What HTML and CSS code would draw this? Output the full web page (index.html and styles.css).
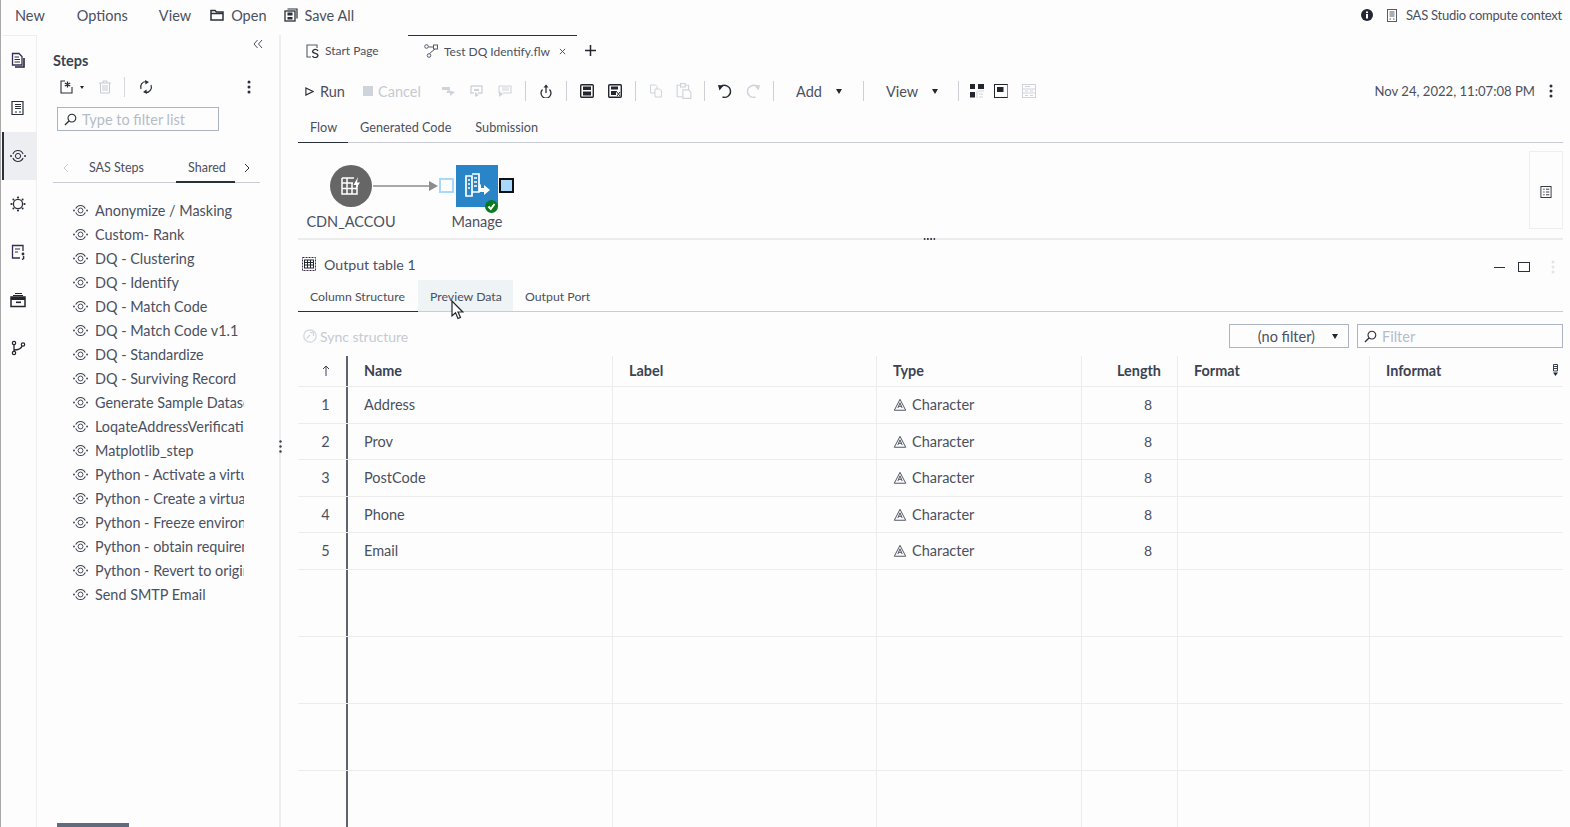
FILE: index.html
```html
<!DOCTYPE html>
<html lang="en">
<head>
    <meta charset="UTF-8">
    <title>SAS Studio - Test DQ Identify.flw</title>
    <link rel="stylesheet" href="styles.css">
</head>
<body>
    <!-- Shared icons -->
    <svg class="sprite" xmlns="http://www.w3.org/2000/svg">
        <symbol id="i-step" viewBox="0 0 16 16">
            <circle cx="8" cy="8" r="2.6" fill="none" stroke="currentColor"/>
            <path d="M2.900 6A5.500 5.500 0 0 1 13.100 6M2.900 10A5.500 5.500 0 0 0 13.100 10" fill="none" stroke="currentColor" stroke-width="1.1"/>
            <circle cx="1" cy="8" r="1" fill="currentColor"/>
            <circle cx="15" cy="8" r="1" fill="currentColor"/>
        </symbol>
        <symbol id="i-char" viewBox="0 0 16 16">
            <path d="M8 1.500L14.500 14H1.500Z" fill="none" stroke="currentColor" stroke-width="1.1"/>
            <path d="M5.500 11.500L8 5.500L10.500 11.500M6.500 9.500H9.500" fill="none" stroke="currentColor" stroke-width="1.1"/>
        </symbol>
        <symbol id="i-search" viewBox="0 0 14 14">
            <circle cx="8.500" cy="5.500" r="4.200" fill="none" stroke="currentColor" stroke-width="1.2"/>
            <path d="M5.400 8.600L1 13" fill="none" stroke="currentColor" stroke-width="1.4"/>
        </symbol>
        <symbol id="i-kebab" viewBox="0 0 4 14">
            <circle cx="2" cy="2" r="1.500" fill="currentColor"/>
            <circle cx="2" cy="7" r="1.500" fill="currentColor"/>
            <circle cx="2" cy="12" r="1.500" fill="currentColor"/>
        </symbol>
    </svg>

    <header class="menubar">
        <a class="menu-item menu-new">New</a>
        <a class="menu-item menu-options">Options</a>
        <a class="menu-item menu-view">View</a>
        <a class="menu-item menu-open">
            <svg class="icon-14" viewBox="0 0 14 14"><path d="M1 12V2.500H5L6.500 4H13V12Z" fill="none" stroke="#2b2f3a" stroke-width="1.5"/><path d="M1 5.500H13" stroke="#2b2f3a" stroke-width="1.5"/></svg>
            Open
        </a>
        <a class="menu-item menu-save">
            <svg class="icon-14" viewBox="0 0 14 14"><rect x="1" y="3" width="10" height="10" fill="none" stroke="#2b2f3a" stroke-width="1.3"/><path d="M3.500 1H13V10.500" fill="none" stroke="#2b2f3a" stroke-width="1.2"/><rect x="3.500" y="4.500" width="5" height="3" fill="#2b2f3a"/><rect x="3.500" y="9" width="5" height="2.500" fill="#2b2f3a"/></svg>
            Save All
        </a>
        <div class="context">
            <svg class="icon-12" viewBox="0 0 12 12"><circle cx="6" cy="6" r="6" fill="#23262f"/><rect x="5" y="5" width="2" height="4.500" fill="#fff"/><rect x="5" y="2.500" width="2" height="1.600" fill="#fff"/></svg>
            <svg class="icon-server" viewBox="0 0 10 13"><rect x="0.500" y="0.500" width="9" height="12" fill="none" stroke="#555c6a"/><path d="M2.500 3H7.500M2.500 5H7.500M2.500 7H7.500M2.500 10H4M6 10H7.500" stroke="#555c6a"/></svg>
            <span>SAS Studio compute context</span>
        </div>
    </header>

    <div class="workspace">
        <nav class="rail">
            <div class="rail-item">
                <svg class="icon-16" viewBox="0 0 16 16"><path d="M2.500 1.500H9L12 4.500V13H2.500Z" fill="none" stroke="#3b2a55" stroke-width="1.300"/><path d="M4.500 5H9M4.500 7.500H10M4.500 10H10" stroke="#2b2f3a"/><path d="M14 6V15H5" fill="none" stroke="#23262f" stroke-width="1.600"/></svg>
            </div>
            <div class="rail-item">
                <svg class="icon-16" viewBox="0 0 16 16"><path d="M3 1.500H13V14.500H2V1.500Z" fill="none" stroke="#2b2f3a" stroke-width="1.200"/><path d="M5 4.500H11M5 6.500H11M5 8.500H11M5 12H7M9 12H11" stroke="#2b2f3a"/></svg>
            </div>
            <div class="rail-item rail-active">
                <svg class="icon-16"><use href="#i-step"/></svg>
            </div>
            <div class="rail-item">
                <svg class="icon-16" viewBox="0 0 16 16"><circle cx="8" cy="8" r="4.600" fill="none" stroke="#2b2f3a" stroke-width="1.300"/><circle cx="8" cy="1.500" r="1.100" fill="#2b2f3a"/><circle cx="8" cy="14.500" r="1.100" fill="#2b2f3a"/><circle cx="1.500" cy="8" r="1.100" fill="#2b2f3a"/><circle cx="14.500" cy="8" r="1.100" fill="#2b2f3a"/><circle cx="3.400" cy="3.400" r="1" fill="#2b2f3a"/><circle cx="12.600" cy="3.400" r="1" fill="#2b2f3a"/><circle cx="3.400" cy="12.600" r="1" fill="#2b2f3a"/><circle cx="12.600" cy="12.600" r="1" fill="#2b2f3a"/></svg>
            </div>
            <div class="rail-item">
                <svg class="icon-16" viewBox="0 0 16 16"><path d="M13 7V1.500H2.500V14H10" fill="none" stroke="#3b2a55" stroke-width="1.300"/><path d="M5 5H10M5 8H8" stroke="#2b2f3a"/><circle cx="13" cy="10" r="1.400" fill="#2b2f3a"/><path d="M13.600 12V14.500L12 15.500" fill="none" stroke="#2b2f3a" stroke-width="1.400"/></svg>
            </div>
            <div class="rail-item">
                <svg class="icon-16" viewBox="0 0 16 16"><rect x="1" y="5" width="14" height="9.500" fill="none" stroke="#23262f" stroke-width="1.500"/><path d="M3 3.500H13M5 1.500H12" stroke="#23262f" stroke-width="1.200"/><rect x="1" y="5" width="14" height="3" fill="#23262f"/><rect x="6" y="9.500" width="5" height="1.600" fill="#23262f"/></svg>
            </div>
            <div class="rail-item">
                <svg class="icon-16" viewBox="0 0 16 16"><circle cx="4" cy="3" r="1.700" fill="none" stroke="#23262f" stroke-width="1.200"/><circle cx="4" cy="13" r="1.700" fill="none" stroke="#23262f" stroke-width="1.200"/><circle cx="13" cy="4.500" r="1.700" fill="none" stroke="#23262f" stroke-width="1.200"/><path d="M4 5V11M4 10C8 10 11 9 12 6" fill="none" stroke="#23262f" stroke-width="1.300"/></svg>
            </div>
        </nav>

        <aside class="steps-panel">
            <div class="collapse">
                <svg class="icon-10" viewBox="0 0 10 10"><path d="M4.500 1L1 5L4.500 9M9 1L5.500 5L9 9" fill="none" stroke="#4b5060" stroke-width="1"/></svg>
            </div>
            <h2 class="panel-title">Steps</h2>
            <div class="panel-tools">
                <svg class="icon-14 tool-new" viewBox="0 0 14 14"><path d="M5 1H1V13H12V7" fill="none" stroke="#2b2f3a" stroke-width="1.100"/><path d="M7.500 1.500V7.500M4.800 3L10.200 6M10.200 3L4.800 6" stroke="#2b2f3a" stroke-width="1.300"/></svg>
                <span class="caret-small"></span>
                <svg class="icon-14 tool-trash" viewBox="0 0 14 14"><path d="M1 3H13M5 3V1H9V3M2.500 3V13H11.500V3M5 5V11M7 5V11M9 5V11" fill="none" stroke="#c6cad2" stroke-width="1"/></svg>
                <span class="panel-sep"></span>
                <svg class="icon-14 tool-sync" viewBox="0 0 14 14"><path d="M2 9A5.500 5.500 0 0 1 7 1.500M12 5A5.500 5.500 0 0 1 7 12.500" fill="none" stroke="#2b2f3a" stroke-width="1.200"/><path d="M6 0L10 2L6.500 4.500ZM8 14L4 12L7.500 9.500Z" fill="#2b2f3a"/></svg>
                <svg class="kebab tool-kebab"><use href="#i-kebab"/></svg>
            </div>
            <div class="panel-filter">
                <svg class="icon-search"><use href="#i-search"/></svg>
                <span>Type to filter list</span>
            </div>
            <div class="panel-tabs">
                <svg class="chev chev-left" viewBox="0 0 6 10"><path d="M5 1L1 5L5 9" fill="none" stroke="#c6cad2" stroke-width="1"/></svg>
                <span class="panel-tab tab-sas">SAS Steps</span>
                <span class="panel-tab tab-shared">Shared</span>
                <svg class="chev chev-right" viewBox="0 0 6 10"><path d="M1 1L5 5L1 9" fill="none" stroke="#2b2f3a" stroke-width="1"/></svg>
            </div>
            <ul class="step-list">
                <li><svg class="icon-step"><use href="#i-step"/></svg><span>Anonymize / Masking</span></li>
                <li><svg class="icon-step"><use href="#i-step"/></svg><span>Custom- Rank</span></li>
                <li><svg class="icon-step"><use href="#i-step"/></svg><span>DQ - Clustering</span></li>
                <li><svg class="icon-step"><use href="#i-step"/></svg><span>DQ - Identify</span></li>
                <li><svg class="icon-step"><use href="#i-step"/></svg><span>DQ - Match Code</span></li>
                <li><svg class="icon-step"><use href="#i-step"/></svg><span>DQ - Match Code v1.1</span></li>
                <li><svg class="icon-step"><use href="#i-step"/></svg><span>DQ - Standardize</span></li>
                <li><svg class="icon-step"><use href="#i-step"/></svg><span>DQ - Surviving Record</span></li>
                <li><svg class="icon-step"><use href="#i-step"/></svg><span>Generate Sample Datasets</span></li>
                <li><svg class="icon-step"><use href="#i-step"/></svg><span>LoqateAddressVerification</span></li>
                <li><svg class="icon-step"><use href="#i-step"/></svg><span>Matplotlib_step</span></li>
                <li><svg class="icon-step"><use href="#i-step"/></svg><span>Python - Activate a virtual</span></li>
                <li><svg class="icon-step"><use href="#i-step"/></svg><span>Python - Create a virtual</span></li>
                <li><svg class="icon-step"><use href="#i-step"/></svg><span>Python - Freeze environment</span></li>
                <li><svg class="icon-step"><use href="#i-step"/></svg><span>Python - obtain requirements</span></li>
                <li><svg class="icon-step"><use href="#i-step"/></svg><span>Python - Revert to original</span></li>
                <li><svg class="icon-step"><use href="#i-step"/></svg><span>Send SMTP Email</span></li>
            </ul>
            <div class="panel-scroll"></div>
        </aside>

        <div class="splitter">
            <svg class="grip" viewBox="0 0 3 13"><circle cx="1.500" cy="1.500" r="1.200" fill="#3b4252"/><circle cx="1.500" cy="6.500" r="1.200" fill="#3b4252"/><circle cx="1.500" cy="11.500" r="1.200" fill="#3b4252"/></svg>
        </div>

        <main class="main">
            <div class="doc-tabs">
                <div class="doc-tab tab-start">
                    <svg class="icon-14" viewBox="0 0 14 14"><path d="M4 1H1V13H5M4 1H11V4" fill="none" stroke="#555c6a" stroke-width="1.100"/><path d="M12 7A3 3 0 0 0 6.500 7.500C7 10 12 9 12 11.500A3 3 0 0 1 6.500 12" fill="none" stroke="#2b2f3a" stroke-width="1.300"/></svg>
                    <span>Start Page</span>
                </div>
                <div class="doc-tab tab-flow">
                    <svg class="icon-14" viewBox="0 0 14 14"><circle cx="2.500" cy="2.500" r="1.800" fill="none" stroke="#555c6a"/><circle cx="5" cy="11.500" r="1.800" fill="none" stroke="#555c6a"/><rect x="9.500" y="1" width="4" height="4" fill="none" stroke="#555c6a"/><path d="M4.500 3H9.500M5.500 9.500L11 5" stroke="#555c6a"/></svg>
                    <span>Test DQ Identify.flw</span>
                    <svg class="icon-close" viewBox="0 0 8 8"><path d="M1 1L7 7M7 1L1 7" stroke="#3b4252" stroke-width="1"/></svg>
                </div>
                <svg class="icon-plus" viewBox="0 0 11 11"><path d="M5.500 0V11M0 5.500H11" stroke="#23262f" stroke-width="1.500"/></svg>
            </div>

            <div class="toolbar">
                <div class="tb-run">
                    <svg class="icon-run" viewBox="0 0 10 10"><path d="M1 1L9 5L1 9Z" fill="none" stroke="#2b2f3a" stroke-width="1.300"/></svg>
                    <span>Run</span>
                </div>
                <div class="tb-cancel">
                    <span class="stop-square"></span>
                    <span>Cancel</span>
                </div>
                <button class="tb-btn"><svg class="icon-14" viewBox="0 0 14 14"><path d="M0 3H8V6H0ZM6 6L13 8L8 12V9H4" fill="#cfd3da"/></svg></button>
                <button class="tb-btn"><svg class="icon-14" viewBox="0 0 14 14"><path d="M1 2H12V9H8M4 9H1V2" fill="none" stroke="#cfd3da" stroke-width="1.400"/><path d="M4 5H9V7H4ZM5 8L9 11L5 13Z" fill="#cfd3da"/></svg></button>
                <button class="tb-btn"><svg class="icon-14" viewBox="0 0 14 14"><path d="M1 2H13V9H5M1 2V9" fill="none" stroke="#cfd3da" stroke-width="1.100"/><path d="M4 4H11M4 6H11" stroke="#cfd3da"/><path d="M1 7L5 10L1 13Z" fill="#cfd3da"/></svg></button>
                <span class="tb-sep"></span>
                <button class="tb-btn"><svg class="icon-14" viewBox="0 0 14 14"><path d="M3.500 5.500A5 5 0 1 0 10.500 5.500" fill="none" stroke="#2b2f3a" stroke-width="1.300"/><path d="M7 9V1.500" stroke="#2b2f3a" stroke-width="1.300"/><path d="M4.500 3.500L7 0.500L9.500 3.500Z" fill="#2b2f3a"/></svg></button>
                <span class="tb-sep"></span>
                <button class="tb-btn"><svg class="icon-14" viewBox="0 0 14 14"><rect x="0.700" y="0.700" width="12.600" height="12.600" rx="1" fill="none" stroke="#23262f" stroke-width="1.400"/><rect x="3" y="2.500" width="8" height="3.500" fill="#23262f"/><rect x="3" y="7.500" width="8" height="4" fill="#23262f"/></svg></button>
                <button class="tb-btn"><svg class="icon-14" viewBox="0 0 14 14"><rect x="0.700" y="0.700" width="12.600" height="12.600" rx="1" fill="none" stroke="#23262f" stroke-width="1.400"/><rect x="3" y="2.500" width="7" height="3" fill="#23262f"/><rect x="3" y="7" width="5" height="4" fill="#23262f"/><path d="M8 7L12 12M12 8L9 12" stroke="#23262f"/></svg></button>
                <span class="tb-sep"></span>
                <button class="tb-btn"><svg class="icon-14" viewBox="0 0 14 14"><path d="M1.500 1H6.500L8 2.500V9H1.500Z" fill="none" stroke="#cfd3da"/><path d="M6 5H10.500L12.500 7V13H6Z" fill="#fdfdfd" stroke="#cfd3da"/></svg></button>
                <button class="tb-btn"><svg class="icon-paste" viewBox="0 0 14 14"><path d="M1 2H11V12H1Z" fill="none" stroke="#cfd3da"/><rect x="4" y="0.500" width="4" height="3" fill="#fdfdfd" stroke="#cfd3da"/><path d="M6 6H11L13 8V13.500H6Z" fill="#fdfdfd" stroke="#cfd3da"/></svg></button>
                <span class="tb-sep"></span>
                <button class="tb-btn"><svg class="icon-16" viewBox="0 0 16 16"><path d="M4 3.500A6 6 0 1 1 5.500 14" fill="none" stroke="#2b2f3a" stroke-width="1.400"/><path d="M1 2L6.500 2.500L2.500 7.500Z" fill="#23262f"/></svg></button>
                <button class="tb-btn"><svg class="icon-16" viewBox="0 0 16 16"><path d="M12 3.500A6 6 0 1 0 10.500 14" fill="none" stroke="#cfd3da" stroke-width="1.400"/><path d="M15 2L9.500 2.500L13.500 7.500Z" fill="#cfd3da"/></svg></button>
                <span class="tb-sep"></span>
                <div class="tb-menu tb-add"><span>Add</span><i class="caret"></i></div>
                <span class="tb-sep sep-view"></span>
                <div class="tb-menu tb-viewmenu"><span>View</span><i class="caret"></i></div>
                <span class="tb-sep sep-layout"></span>
                <svg class="icon-14 layout-a" viewBox="0 0 14 14"><rect x="0" y="0" width="5" height="5" fill="#23262f"/><rect x="8" y="0" width="6" height="5" fill="#23262f"/><rect x="0" y="8" width="5" height="5.500" fill="#23262f"/><path d="M8 7H14M7 7V14M9 10H13M9 13H13" stroke="#cfd3da"/></svg>
                <svg class="icon-14 layout-b" viewBox="0 0 14 14"><rect x="0.500" y="0.500" width="13" height="13" fill="none" stroke="#23262f"/><path d="M13.500 0.500V13.500" stroke="#4a90d0"/><rect x="3" y="3" width="6.500" height="5" fill="#23262f"/></svg>
                <svg class="icon-14 layout-c" viewBox="0 0 14 14"><rect x="0.500" y="0.500" width="13" height="13" fill="none" stroke="#cfd3da"/><path d="M0.500 5H13.500M0.500 9H13.500" stroke="#cfd3da"/><path d="M3 2.500H8M3 7H6M8 7H11M3 11.500H6M8 11.500H11" stroke="#cfd3da"/></svg>
                <div class="tb-date">
                    <span>Nov 24, 2022, 11:07:08 PM</span>
                    <svg class="kebab"><use href="#i-kebab"/></svg>
                </div>
            </div>

            <div class="sub-tabs flow-tabs">
                <span class="sub-tab sub-active">Flow</span>
                <span class="sub-tab">Generated Code</span>
                <span class="sub-tab">Submission</span>
            </div>

            <section class="canvas">
                <div class="node-table">
                    <svg class="icon-node" viewBox="0 0 20 20"><path d="M1 2H13M1 2V18H16V9M1 7H12M1 12.500H16M6 2V18M11 7V18" fill="none" stroke="#fff" stroke-width="1.500"/><path d="M17 1L12.500 9H15.500L14 14L19 6.500H16Z" fill="#fff"/></svg>
                </div>
                <span class="node-label label-table">CDN_ACCOU</span>
                <svg class="edge" viewBox="0 0 66 12"><path d="M0 6H58" stroke="#8c8c8c" stroke-width="1.500"/><path d="M56 1L65 6L56 11Z" fill="#8c8c8c"/></svg>
                <span class="port port-in"></span>
                <div class="node-manage">
                    <svg class="icon-manage" viewBox="0 0 26 26"><path d="M2 3H8V23H2ZM8 1H15V19H8" fill="none" stroke="#fff" stroke-width="1.700"/><path d="M4 7H6M4 11H6M4 15H6M10 5H13M10 9H13M10 13H13" stroke="#fff" stroke-width="1.400"/><path d="M15 15V10L17 12V15H20V12L26 17L20 22V19H15Z" fill="#fff"/></svg>
                </div>
                <span class="check">
                    <svg viewBox="0 0 13 13"><path d="M3.500 6.500L5.800 9L9.500 4" fill="none" stroke="#fff" stroke-width="2"/></svg>
                </span>
                <span class="port port-out"></span>
                <span class="node-label label-manage">Manage</span>
                <div class="details-tab">
                    <svg class="icon-12" viewBox="0 0 12 13"><rect x="0.500" y="0.500" width="11" height="12" fill="none" stroke="#2b2f3a"/><path d="M3 3.500H4.500M6 3.500H9.500M3 6.500H4.500M6 6.500H9.500M3 9.500H4.500M6 9.500H9.500" stroke="#2b2f3a"/></svg>
                </div>
            </section>

            <div class="divider"><span class="divider-dots"></span></div>

            <div class="output-head">
                <svg class="icon-14" viewBox="0 0 14 14"><rect x="0.500" y="0.500" width="13" height="13" fill="none" stroke="#3b2a55" stroke-dasharray="2 1"/><rect x="2.500" y="3" width="9" height="8" fill="none" stroke="#23262f"/><path d="M2.500 5.500H11.500M2.500 8H11.500M5.500 3V11M8.500 3V11" stroke="#23262f"/></svg>
                <span class="output-title">Output table 1</span>
                <div class="output-actions">
                    <span class="act-min"></span>
                    <span class="act-max"></span>
                    <svg class="kebab act-more"><use href="#i-kebab"/></svg>
                </div>
            </div>

            <div class="sub-tabs output-tabs">
                <span class="sub-tab sub-active">Column Structure</span>
                <span class="sub-tab sub-hover">Preview Data</span>
                <span class="sub-tab">Output Port</span>
            </div>

            <div class="sync-row">
                <svg class="icon-14" viewBox="0 0 14 14"><circle cx="7" cy="7" r="6.200" fill="none" stroke="#d3d7de" stroke-width="1.300"/><path d="M3.500 9.500L7 6M7 3.500H10.500V7" fill="none" stroke="#d3d7de" stroke-width="1.300"/></svg>
                <span class="sync-label">Sync structure</span>
                <div class="select-box"><span>(no filter)</span><i class="caret"></i></div>
                <div class="filter-box">
                    <svg class="icon-search"><use href="#i-search"/></svg>
                    <span>Filter</span>
                </div>
            </div>

            <div class="grid">
                <div class="row row-head">
                    <div class="cell cell-index">
                        <svg class="icon-up" viewBox="0 0 8 11"><path d="M4 11V1M1 4L4 1L7 4" fill="none" stroke="#3b4252"/></svg>
                    </div>
                    <div class="cell">Name</div>
                    <div class="cell">Label</div>
                    <div class="cell">Type</div>
                    <div class="cell cell-right">Length</div>
                    <div class="cell">Format</div>
                    <div class="cell cell-last">Informat
                        <svg class="icon-cols" viewBox="0 0 5 12"><path d="M0.500 0.500H4.500V7H0.500ZM0.500 2.500H4.500M0.500 4.500H4.500" fill="none" stroke="#3b4252"/><path d="M0 8.500H5L2.500 12Z" fill="#23262f"/></svg>
                    </div>
                </div>
                <div class="row">
                    <div class="cell cell-index">1</div>
                    <div class="cell">Address</div>
                    <div class="cell"></div>
                    <div class="cell cell-type"><svg class="icon-char"><use href="#i-char"/></svg>Character</div>
                    <div class="cell cell-num">8</div>
                    <div class="cell"></div>
                    <div class="cell"></div>
                </div>
                <div class="row">
                    <div class="cell cell-index">2</div>
                    <div class="cell">Prov</div>
                    <div class="cell"></div>
                    <div class="cell cell-type"><svg class="icon-char"><use href="#i-char"/></svg>Character</div>
                    <div class="cell cell-num">8</div>
                    <div class="cell"></div>
                    <div class="cell"></div>
                </div>
                <div class="row">
                    <div class="cell cell-index">3</div>
                    <div class="cell">PostCode</div>
                    <div class="cell"></div>
                    <div class="cell cell-type"><svg class="icon-char"><use href="#i-char"/></svg>Character</div>
                    <div class="cell cell-num">8</div>
                    <div class="cell"></div>
                    <div class="cell"></div>
                </div>
                <div class="row">
                    <div class="cell cell-index">4</div>
                    <div class="cell">Phone</div>
                    <div class="cell"></div>
                    <div class="cell cell-type"><svg class="icon-char"><use href="#i-char"/></svg>Character</div>
                    <div class="cell cell-num">8</div>
                    <div class="cell"></div>
                    <div class="cell"></div>
                </div>
                <div class="row">
                    <div class="cell cell-index">5</div>
                    <div class="cell">Email</div>
                    <div class="cell"></div>
                    <div class="cell cell-type"><svg class="icon-char"><use href="#i-char"/></svg>Character</div>
                    <div class="cell cell-num">8</div>
                    <div class="cell"></div>
                    <div class="cell"></div>
                </div>
                <div class="row row-empty">
                    <div class="cell cell-index"></div><div class="cell"></div><div class="cell"></div><div class="cell"></div><div class="cell"></div><div class="cell"></div><div class="cell"></div>
                </div>
                <div class="row row-empty">
                    <div class="cell cell-index"></div><div class="cell"></div><div class="cell"></div><div class="cell"></div><div class="cell"></div><div class="cell"></div><div class="cell"></div>
                </div>
                <div class="row row-empty">
                    <div class="cell cell-index"></div><div class="cell"></div><div class="cell"></div><div class="cell"></div><div class="cell"></div><div class="cell"></div><div class="cell"></div>
                </div>
                <div class="row row-empty row-end">
                    <div class="cell cell-index"></div><div class="cell"></div><div class="cell"></div><div class="cell"></div><div class="cell"></div><div class="cell"></div><div class="cell"></div>
                </div>
            </div>
        </main>
    </div>

    <!-- Mouse pointer over the Preview Data tab -->
    <svg class="pointer" viewBox="0 0 13 20"><path d="M1 1V16L4.500 12.800L7 18.500L9.500 17.400L7 12H11.800Z" fill="#fff" stroke="#23262f" stroke-width="1.200"/></svg>
</body>
</html>
```

FILE: styles.css
```css
/* Base styles */
html, body {
    height: 100%;
    margin: 0;
    overflow: hidden;
}

body {
    font-family: Lato, 'Open Sans', sans-serif;
    font-size: 14.5px;
    color: #4b5060;
    background-color: #fdfdfd;
    border-left: 1px solid #a8a8a8;
    box-sizing: border-box;
    display: flex;
    flex-direction: column;
    position: relative;
}

svg {
    display: block;
    flex: none;
}

.sprite {
    display: none;
}

.icon-10 { width: 10px; height: 10px; }
.icon-12 { width: 12px; height: 12px; }
.icon-14 { width: 14px; height: 14px; }
.icon-16 { width: 16px; height: 16px; }
.icon-paste { width: 16px; height: 16px; }
.icon-search { width: 13px; height: 13px; color: #2b2f3a; }

.kebab {
    width: 4px;
    height: 14px;
    color: #2b2f3a;
}

.caret {
    display: inline-block;
    width: 0;
    height: 0;
    border-left: 3.5px solid transparent;
    border-right: 3.5px solid transparent;
    border-top: 5px solid #23262f;
}

/* Menu bar */
.menubar {
    height: 35px;
    flex: none;
    display: flex;
    align-items: center;
    padding-bottom: 5px;
    box-sizing: border-box;
}

.menu-item {
    display: flex;
    align-items: center;
    gap: 7px;
    color: #4b5060;
}

.menu-new { margin-left: 14px; }
.menu-options { margin-left: 32px; }
.menu-view { margin-left: 31px; }
.menu-open { margin-left: 19px; }
.menu-save { margin-left: 18px; gap: 6px; }

.context {
    margin-left: auto;
    margin-right: 8px;
    display: flex;
    align-items: center;
    font-size: 13px;
    letter-spacing: -0.25px;
}

.icon-server {
    width: 10px;
    height: 13px;
    margin-left: 14px;
    margin-right: 9px;
}

/* Main columns */
.workspace {
    flex: 1;
    display: flex;
    min-height: 0;
}

.rail {
    width: 35px;
    margin-left: 1px;
    flex: none;
    border-top: 1px solid #eeeeee;
    border-right: 1px solid #eeeeee;
    box-sizing: border-box;
}

.rail-item {
    height: 48px;
    display: flex;
    align-items: center;
    justify-content: center;
    padding-right: 2px;
    box-sizing: border-box;
}

.rail-active {
    background-color: #eceef1;
    border-left: 2px solid #2b2f3a;
    padding-right: 4px;
    color: #2b2f3a;
}

/* Steps panel */
.steps-panel {
    width: 242px;
    flex: none;
    position: relative;
    padding: 0 19px 0 16px;
    box-sizing: border-box;
}

.collapse {
    display: flex;
    justify-content: flex-end;
    padding: 4px 0 0;
    margin-right: -3px;
}

.panel-title {
    margin: 3px 0 0;
    font-size: 14.5px;
    font-weight: 700;
    line-height: 18px;
    color: #3b4252;
}

.panel-tools {
    display: flex;
    align-items: center;
    height: 22px;
    margin-top: 6px;
    padding-left: 7px;
}

.caret-small {
    margin-left: 6px;
    border-left: 2.5px solid transparent;
    border-right: 2.5px solid transparent;
    border-top: 3.5px solid #23262f;
}

.tool-trash { margin-left: 14px; }

.panel-sep {
    width: 1px;
    height: 20px;
    margin-left: 12px;
    background-color: #d5d8de;
}

.tool-sync { margin-left: 14px; }
.tool-kebab { margin-left: 94px; }

.panel-filter {
    width: 162px;
    height: 24px;
    margin: 9px 0 0 4px;
    border: 1px solid #aab4c4;
    box-sizing: border-box;
    display: flex;
    align-items: center;
    gap: 5px;
    padding-left: 6px;
    color: #b5bcc9;
}

.panel-tabs {
    height: 40px;
    margin-top: 12px;
    width: 207px;
    border-bottom: 1px solid #c9ccd5;
    display: flex;
    align-items: center;
    position: relative;
    font-size: 12.5px;
    box-sizing: border-box;
    padding-top: 10px;
}

.chev {
    width: 6px;
    height: 10px;
}

.chev-left { margin-left: 10px; }
.chev-right { margin-left: 18px; }

.panel-tab { color: #4b5060; }
.tab-sas { margin-left: 20px; }

.tab-shared {
    margin-left: 44px;
}

.tab-shared::after {
    content: "";
    position: absolute;
    left: 123px;
    width: 59px;
    bottom: -1px;
    height: 2px;
    background-color: #2b2f3a;
}

.step-list {
    list-style: none;
    margin: 15px 0 0;
    padding: 0 0 0 20px;
    width: 171px;
    font-size: 14.4px;
}

.step-list li {
    height: 24px;
    display: flex;
    align-items: center;
    gap: 7px;
    white-space: nowrap;
    overflow: hidden;
}

.icon-step {
    width: 15px;
    height: 15px;
    color: #3b4252;
}

.panel-scroll {
    position: absolute;
    left: 20px;
    bottom: 0;
    width: 72px;
    height: 4px;
    background-color: #5f6b80;
}

.splitter {
    width: 2px;
    flex: none;
    background-color: #eeeeee;
    position: relative;
}

.grip {
    position: absolute;
    left: 0;
    top: 405px;
    width: 3px;
    height: 13px;
}

/* Document area */
.main {
    flex: 1;
    min-width: 0;
    padding: 0 7px 0 17px;
    display: flex;
    flex-direction: column;
}

.doc-tabs {
    height: 33px;
    flex: none;
    display: flex;
    align-items: center;
    font-size: 12px;
}

.doc-tab {
    display: flex;
    align-items: center;
    height: 100%;
    box-sizing: border-box;
    padding-bottom: 2px;
}

.tab-start {
    width: 110px;
    padding-left: 8px;
    gap: 5px;
}

.tab-flow {
    width: 169px;
    padding-left: 16px;
    border-top: 1px solid #2b2f3a;
    gap: 6px;
}

.icon-close {
    width: 7px;
    height: 7px;
    margin-left: 3px;
}

.icon-plus {
    width: 11px;
    height: 11px;
    margin-left: 8px;
    margin-bottom: 2px;
}

.toolbar {
    height: 32px;
    flex: none;
    margin-top: 7px;
    display: flex;
    align-items: center;
}

.tb-run {
    display: flex;
    align-items: center;
    gap: 6px;
    margin-left: 7px;
    width: 58px;
}

.icon-run {
    width: 9px;
    height: 9px;
}

.tb-cancel {
    display: flex;
    align-items: center;
    gap: 5px;
    width: 72px;
    color: #c6cad2;
}

.stop-square {
    width: 10px;
    height: 10px;
    background-color: #cfd3da;
}

.tb-btn {
    width: 28px;
    height: 28px;
    padding: 0;
    border: none;
    background: none;
    display: flex;
    align-items: center;
    justify-content: center;
}

.tb-sep {
    width: 1px;
    height: 20px;
    margin: 0 6px;
    background-color: #cdd0d6;
}

.tb-menu {
    display: flex;
    align-items: center;
    gap: 14px;
}

.tb-add {
    margin-left: 16px;
}

.sep-view {
    margin-left: 21px;
    margin-right: 0;
}

.tb-viewmenu {
    margin-left: 22px;
}

.sep-layout {
    margin-left: 20px;
    margin-right: 0;
}

.layout-a { margin-left: 11px; }
.layout-b { margin-left: 10px; }
.layout-c { margin-left: 14px; }

.tb-date {
    margin-left: auto;
    margin-right: 10px;
    display: flex;
    align-items: center;
    gap: 14px;
    font-size: 13.1px;
}

.sub-tabs {
    height: 28px;
    flex: none;
    margin-top: 8px;
    display: flex;
    font-size: 12.7px;
    border-bottom: 1px solid #c9ccd5;
    box-sizing: border-box;
}

.sub-tab {
    padding: 0 12px;
    display: flex;
    align-items: center;
}

.flow-tabs .sub-tab {
    padding-bottom: 3px;
    box-sizing: border-box;
}

.flow-tabs .sub-active {
    width: 50px;
}

.sub-active {
    position: relative;
}

.sub-active::after {
    content: "";
    position: absolute;
    left: 0;
    right: 0;
    bottom: -1px;
    height: 1px;
    background-color: #2b2f3a;
}

.sub-hover {
    background-color: #eef3f6;
}

/* Flow diagram: nodes sit on a free canvas */
.canvas {
    height: 95px;
    flex: none;
    position: relative;
}

.node-table {
    position: absolute;
    left: 32px;
    top: 22px;
    width: 42px;
    height: 42px;
    border-radius: 50%;
    background-color: #666666;
    display: flex;
    align-items: center;
    justify-content: center;
}

.icon-node {
    width: 20px;
    height: 20px;
}

.node-label {
    position: absolute;
    top: 70px;
    width: 110px;
    text-align: center;
    line-height: 18px;
}

.label-table { left: -2px; }
.label-manage { left: 124px; }

.edge {
    position: absolute;
    left: 75px;
    top: 37px;
    width: 66px;
    height: 12px;
}

.port {
    position: absolute;
    top: 35px;
    width: 15px;
    height: 15px;
    box-sizing: border-box;
}

.port-in {
    left: 141px;
    border: 2px solid #a8d8fb;
    background-color: #fdfdfd;
}

.port-out {
    left: 201px;
    border: 2px solid #111111;
    background-color: #a8d8fb;
}

.node-manage {
    position: absolute;
    left: 158px;
    top: 22px;
    width: 42px;
    height: 42px;
    background-color: #2a85c8;
    display: flex;
    align-items: center;
    justify-content: center;
}

.icon-manage {
    width: 26px;
    height: 26px;
}

.check {
    position: absolute;
    left: 187px;
    top: 57px;
    width: 13px;
    height: 13px;
    border-radius: 50%;
    background-color: #0b7a1e;
}

.details-tab {
    position: absolute;
    right: 0;
    top: 8px;
    width: 34px;
    height: 78px;
    border: 1px solid #eeeeee;
    box-sizing: border-box;
    display: flex;
    align-items: center;
    justify-content: center;
    padding-top: 4px;
}

.divider {
    height: 2px;
    flex: none;
    background-color: #ececec;
    position: relative;
}

.divider-dots {
    position: absolute;
    left: 625px;
    top: 0;
    width: 13px;
    height: 2px;
    background-image: radial-gradient(circle, #3b4252 1px, transparent 1px);
    background-size: 3.25px 2px;
}

/* Output table panel */
.output-head {
    height: 40px;
    flex: none;
    display: flex;
    align-items: center;
    padding: 8px 0 0 4px;
    box-sizing: border-box;
    gap: 8px;
}

.output-title {
    font-size: 14.2px;
}

.output-actions {
    margin-left: auto;
    display: flex;
    align-items: center;
    margin-right: 8px;
    padding-top: 5px;
}

.act-min {
    width: 11px;
    height: 1px;
    margin-top: 2px;
    background-color: #2b2f3a;
}

.act-max {
    width: 10px;
    height: 8px;
    margin-left: 13px;
    border: 1px solid #2b2f3a;
}

.act-more {
    margin-left: 21px;
    color: #e2e4e8;
}

.output-tabs {
    height: 32px;
    margin-top: 0;
    font-size: 12.3px;
}

.output-tabs .sub-tab {
    padding-top: 2px;
    box-sizing: border-box;
}

.output-tabs .sub-active {
    width: 120px;
}

.output-tabs .sub-hover {
    width: 95px;
    padding-right: 0;
}

.sync-row {
    height: 44px;
    flex: none;
    display: flex;
    align-items: center;
    padding-left: 5px;
    color: #c6cad2;
    padding-top: 4px;
    box-sizing: border-box;
}

.sync-label {
    margin-left: 3px;
    font-size: 14px;
}

.select-box {
    margin-left: auto;
    width: 120px;
    height: 24px;
    border: 1px solid #aab4c4;
    box-sizing: border-box;
    display: flex;
    align-items: center;
    justify-content: flex-end;
    gap: 17px;
    padding-right: 10px;
    color: #4b5060;
}

.filter-box {
    width: 206px;
    height: 24px;
    margin-left: 8px;
    border: 1px solid #aab4c4;
    box-sizing: border-box;
    display: flex;
    align-items: center;
    gap: 5px;
    padding-left: 6px;
    color: #b5bcc9;
}

/* Column grid */
.grid {
    flex: 1;
    min-height: 0;
    overflow: hidden;
}

.row {
    display: grid;
    grid-template-columns: 50px 265px 264px 205px 96px 192px 193px;
    height: 36.5px;
    border-bottom: 1px solid #ececec;
    box-sizing: border-box;
}

.row-head {
    height: 31px;
    font-weight: 700;
    color: #3b4252;
    font-size: 14.4px;
}

.row-head .cell {
    padding-bottom: 2px;
}

.row-empty {
    height: 67px;
}

.row-end {
    border-bottom: none;
}

.cell {
    display: flex;
    align-items: center;
    padding: 0 16px;
    border-right: 1px solid #ececec;
    box-sizing: border-box;
}

.row .cell:last-child {
    border-right: none;
}

.cell-index {
    justify-content: center;
    padding: 0 0 0 7px;
    border-right: 2px solid #5d6470;
}

.cell-right {
    justify-content: flex-end;
}

.cell-num {
    justify-content: flex-end;
    padding-right: 25px;
    font-size: 14px;
}

.cell-type {
    gap: 5px;
    font-size: 14.5px;
}

.cell-last {
    justify-content: space-between;
    padding-right: 5px;
}

.icon-up {
    width: 8px;
    height: 11px;
}

.icon-char {
    width: 14px;
    height: 14px;
    color: #4b5060;
    margin-top: 1px;
}

.icon-cols {
    width: 5px;
    height: 12px;
}

.pointer {
    position: absolute;
    left: 450px;
    top: 300px;
    width: 13px;
    height: 20px;
}
```
